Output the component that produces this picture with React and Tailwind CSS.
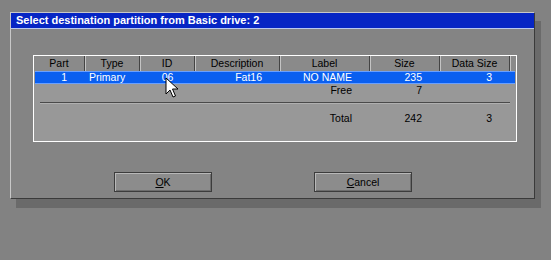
import React from 'react';

const cols = [
  { name: 'Part', w: 51 },
  { name: 'Type', w: 55 },
  { name: 'ID', w: 55 },
  { name: 'Description', w: 85 },
  { name: 'Label', w: 90 },
  { name: 'Size', w: 70 },
  { name: 'Data Size', w: 70 },
];

const Cell = ({ w, align = 'right', children }) => (
  <div
    className={`shrink-0 whitespace-nowrap ${align === 'right' ? 'text-right pr-[18px]' : align === 'left' ? 'text-left pl-[4px]' : 'text-center'}`}
    style={{ width: w }}
  >
    {children}
  </div>
);

const Row = ({ selected, cells }) => (
  <div
    className={`flex h-[13px] items-center leading-none mx-[1px] ${
      selected ? 'bg-[#0a5ff0] text-white border-y border-[#6aa0ff]' : 'text-black'
    }`}
  >
    <Cell w={50}>{cells[0]}</Cell>
    <Cell w={55} align="left">{cells[1]}</Cell>
    <Cell w={55} align="center">{cells[2]}</Cell>
    <Cell w={85}>{cells[3]}</Cell>
    <Cell w={90}>{cells[4]}</Cell>
    <Cell w={70}>{cells[5]}</Cell>
    <Cell w={70}>{cells[6]}</Cell>
  </div>
);

const Button = ({ label, rest }) => (
  <button className="w-[98px] h-[20px] bg-[#8c8c8c] border border-[#3c3c3c] shadow-[inset_1px_1px_0_#b8b8b8,inset_-1px_-1px_0_#6c6c6c] text-[10.5px] text-black leading-none">
    <span className="underline underline-offset-1">{label}</span>
    {rest}
  </button>
);

const Cursor = () => (
  <svg className="absolute left-[165px] top-[77px]" width="14" height="22" viewBox="0 0 14 22">
    <path
      d="M1 1 L1 17 L5 13 L8 20 L10.5 19 L7.5 12 L13 12 Z"
      fill="#ffffff"
      stroke="#000000"
      strokeWidth="1"
    />
  </svg>
);

export default function App() {
  return (
    <div
      className="relative w-[551px] h-[260px] bg-[#828282] overflow-hidden pt-[12px] pl-[10px]"
      style={{ fontFamily: '"Liberation Sans", Arial, sans-serif' }}
    >
      <div className="w-[525px] h-[187px] bg-[#848484] border-t border-l border-[#c8c8c8] border-r border-b border-r-[#3a3a3a] border-b-[#3a3a3a] shadow-[6px_9px_0_#6a6a6a] flex flex-col">
        {/* title bar */}
        <div className="h-[16px] bg-[#0625c4] border-b border-[#b8c8f0] flex items-center pl-[5px]">
          <span className="text-white font-bold text-[11px] leading-none">
            Select destination partition from Basic drive: 2
          </span>
        </div>

        {/* partition table */}
        <div className="mt-[26px] ml-[22px] w-[484px] h-[87px] border border-white bg-[#989898] flex flex-col text-[10.5px]">
          <div className="flex h-[15px] bg-[#8a8a8a] items-center leading-none text-black">
            {cols.map((c) => (
              <div
                key={c.name}
                className="shrink-0 h-full flex items-center justify-center border-r border-r-[#444444] shadow-[1px_0_0_#c4c4c4]"
                style={{ width: c.w }}
              >
                {c.name}
              </div>
            ))}
            <div className="flex-1 h-full" />
          </div>
          <Row selected cells={['1', 'Primary', '06', 'Fat16', 'NO NAME', '235', '3']} />
          <Row cells={['', '', '', '', 'Free', '7', '']} />
          <div className="mt-[5px] mx-[6px] h-[2px] border-t border-[#4a4a4a] border-b border-b-[#b0b0b0]" />
          <div className="mt-[8px]">
            <Row cells={['', '', '', '', 'Total', '242', '3']} />
          </div>
        </div>

        {/* buttons */}
        <div className="mt-[30px] flex pl-[103px] gap-[102px]">
          <Button label="O" rest="K" />
          <Button label="C" rest="ancel" />
        </div>
      </div>
      <Cursor />
    </div>
  );
}
